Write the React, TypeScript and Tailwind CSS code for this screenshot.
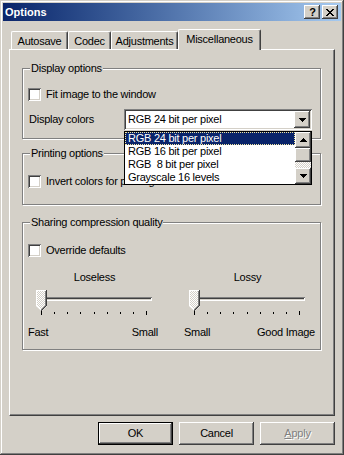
import React from "react";

const raised =
  "shadow-[inset_-1px_-1px_#404040,inset_1px_1px_#ffffff,inset_-2px_-2px_#808080]";
const sunken =
  "shadow-[inset_1px_1px_#808080,inset_-1px_-1px_#ffffff,inset_2px_2px_#404040,inset_-2px_-2px_#d4d0c8]";
const etched = "border border-[#808080] shadow-[inset_1px_1px_#ffffff,1px_1px_#ffffff]";

function Check() {
  return <div className={`w-[13px] h-[13px] bg-white shrink-0 ${sunken}`} />;
}

function DownArrow() {
  return (
    <svg width="7" height="4" viewBox="0 0 7 4">
      <path d="M0 0h7v1H0zM1 1h5v1H1zM2 2h3v1H2zM3 3h1v1H3z" fill="#000" />
    </svg>
  );
}

function UpArrow() {
  return (
    <svg width="7" height="4" viewBox="0 0 7 4">
      <path d="M3 0h1v1H3zM2 1h3v1H2zM1 2h5v1H1zM0 3h7v1H0z" fill="#000" />
    </svg>
  );
}

function Thumb({ id }: { id: string }) {
  return (
    <svg className="absolute left-0 top-0" width="11" height="21" viewBox="0 0 11 21">
      <defs>
        <pattern id={id} width="2" height="2" patternUnits="userSpaceOnUse">
          <rect width="2" height="2" fill="#d4d0c8" />
          <rect width="1" height="1" fill="#ffffff" />
          <rect x="1" y="1" width="1" height="1" fill="#ffffff" />
        </pattern>
      </defs>
      <path d="M0 0H11V16L5.5 21L0 16Z" fill={`url(#${id})`} />
      <path d="M0 0h10v1H0zM0 0h1v16H0zM1 16h1v1H1zM2 17h1v1H2zM3 18h1v1H3zM4 19h1v1H4z" fill="#ffffff" />
      <path d="M9 1h1v15H9zM8 16h1v1H8zM7 17h1v1H7zM6 18h1v1H6zM5 19h1v1H5z" fill="#808080" />
      <path d="M10 0h1v16h-1zM9 16h1v1H9zM8 17h1v1H8zM7 18h1v1H7zM6 19h1v1H6zM5 20h1v1H5z" fill="#404040" />
    </svg>
  );
}

function Slider({ id }: { id: string }) {
  const ticks = [0, 1, 2, 3, 4, 5, 6, 7, 8];
  return (
    <div className="relative w-[117px] h-[26px]">
      <div className={`absolute left-0 top-[7px] w-[116px] h-[4px] ${sunken}`} />
      <Thumb id={id} />
      <div className="absolute left-[5px] top-[21px] w-[106px] flex justify-between items-start">
        {ticks.map((t) =>
          t === 0 || t === 8 ? (
            <div key={t} className="w-[1px] h-[4px] bg-black" />
          ) : (
            <div key={t} className="w-[1px] h-[2px] mt-[1px] bg-black" />
          )
        )}
      </div>
    </div>
  );
}

export default function App() {
  return (
    <div
      className={`w-[344px] h-[455px] bg-[#d4d0c8] p-[3px] flex flex-col font-['Liberation_Sans',Arial,sans-serif] text-[11px] tracking-[-0.25px] text-black shadow-[inset_-1px_-1px_#404040,inset_1px_1px_#d4d0c8,inset_-2px_-2px_#808080,inset_2px_2px_#ffffff]`}
    >
      {/* Title bar */}
      <div className="h-[18px] shrink-0 flex items-center bg-gradient-to-r from-[#0a246a] to-[#a6caf0] pl-[2px] pr-[3px]">
        <span className="text-white font-bold tracking-normal leading-[13px]">Options</span>
        <div className="ml-auto flex gap-[2px]">
          <div className={`w-[16px] h-[14px] bg-[#d4d0c8] flex items-center justify-center ${raised}`}>
            <span className="font-bold text-[11px] leading-[11px] tracking-normal pl-[1px]">?</span>
          </div>
          <div className={`w-[16px] h-[14px] bg-[#d4d0c8] flex items-center justify-center ${raised}`}>
            <svg width="8" height="7" viewBox="0 0 8 7">
              <path
                d="M0 0h2v1H0zM6 0h2v1H6zM1 1h2v1H1zM5 1h2v1H5zM2 2h4v1H2zM3 3h2v1H3zM2 4h4v1H2zM1 5h2v1H1zM5 5h2v1H5zM0 6h2v1H0zM6 6h2v1H6z"
                fill="#000"
              />
            </svg>
          </div>
        </div>
      </div>

      {/* Tab control */}
      <div className="mt-[8px] mx-[6px] flex flex-col">
        <div className="h-[20px] flex items-end pl-[2px]">
          <div className="w-[57px] h-[18px] flex items-center justify-center pt-[2px] border-t border-l border-r border-t-white border-l-white border-r-[#404040] shadow-[inset_-1px_0_#808080] rounded-t-[2px]">
            Autosave
          </div>
          <div className="w-[43px] h-[18px] flex items-center justify-center pt-[2px] border-t border-l border-r border-t-white border-l-white border-r-[#404040] shadow-[inset_-1px_0_#808080] rounded-t-[2px]">
            Codec
          </div>
          <div className="w-[67px] h-[18px] flex items-center justify-center pt-[2px] border-t border-l border-r border-t-white border-l-white border-r-[#404040] shadow-[inset_-1px_0_#808080] rounded-t-[2px]">
            Adjustments
          </div>
          <div className="relative z-10 -mb-px w-[83px] h-[21px] bg-[#d4d0c8] flex items-center justify-center pb-[1px] border-t border-l border-r border-t-white border-l-white border-r-[#404040] shadow-[inset_-1px_0_#808080] rounded-t-[2px]">
            Miscellaneous
          </div>
        </div>

        <div className="h-[367px] flex flex-col border-t border-l border-r border-b border-t-white border-l-white border-r-[#404040] border-b-[#404040] shadow-[inset_-1px_-1px_#808080]">
          {/* Display options */}
          <div className={`relative w-[299px] h-[71px] ml-[12px] mt-[18px] pl-[5px] pt-[19px] ${etched}`}>
            <span className="absolute -top-[7px] left-[7px] px-[1px] bg-[#d4d0c8] leading-[13px]">
              Display options
            </span>
            <div className="flex items-center h-[13px]">
              <Check />
              <span className="ml-[5px] leading-[13px]">Fit image to the window</span>
            </div>
            <div className="flex items-center mt-[8px]">
              <div className="w-[96px] pl-[1px] leading-[13px]">Display colors</div>
              <div className="relative">
                <div className={`w-[188px] h-[21px] bg-white flex items-center p-[2px] ${sunken}`}>
                  <span className="flex-1 pl-[2px] leading-[13px] whitespace-pre">RGB 24 bit per pixel</span>
                  <div className={`w-[16px] h-[17px] bg-[#d4d0c8] flex items-center justify-center ${raised}`}>
                    <DownArrow />
                  </div>
                </div>
                {/* Open dropdown list */}
                <div className="absolute left-0 top-[22px] z-20 w-[188px] h-[54px] border border-black bg-white flex">
                  <div className="flex-1 flex flex-col">
                    <div className="h-[13px] bg-[#0a246a] text-white border border-dotted border-[#f4e8a0] pl-[2px] leading-[11px] whitespace-pre">
                      RGB 24 bit per pixel
                    </div>
                    <div className="h-[13px] pl-[3px] leading-[13px] whitespace-pre">RGB 16 bit per pixel</div>
                    <div className="h-[13px] pl-[3px] leading-[13px] whitespace-pre">RGB  8 bit per pixel</div>
                    <div className="h-[13px] pl-[3px] leading-[13px] whitespace-pre">Grayscale 16 levels</div>
                  </div>
                  <div className="w-[16px] flex flex-col">
                    <div className={`h-[16px] bg-[#d4d0c8] flex items-center justify-center ${raised}`}>
                      <UpArrow />
                    </div>
                    <div className={`h-[14px] bg-[#d4d0c8] ${raised}`} />
                    <div className="h-[6px] bg-[image:repeating-conic-gradient(#ffffff_0_25%,#d4d0c8_0_50%)] bg-[length:2px_2px]" />
                    <div className={`h-[16px] bg-[#d4d0c8] flex items-center justify-center ${raised}`}>
                      <DownArrow />
                    </div>
                  </div>
                </div>
              </div>
            </div>
          </div>

          {/* Printing options */}
          <div className={`relative w-[299px] h-[52px] ml-[12px] mt-[14px] pl-[5px] pt-[21px] ${etched}`}>
            <span className="absolute -top-[7px] left-[7px] px-[1px] bg-[#d4d0c8] leading-[13px]">
              Printing options
            </span>
            <div className="flex items-center h-[13px]">
              <Check />
              <span className="ml-[5px] leading-[13px]">Invert colors for printing</span>
            </div>
          </div>

          {/* Sharing compression quality */}
          <div className={`relative w-[299px] h-[128px] ml-[12px] mt-[17px] pl-[5px] pt-[21px] ${etched}`}>
            <span className="absolute -top-[7px] left-[7px] px-[1px] bg-[#d4d0c8] leading-[13px]">
              Sharing compression quality
            </span>
            <div className="flex items-center h-[13px]">
              <Check />
              <span className="ml-[5px] leading-[13px]">Override defaults</span>
            </div>
            <div className="flex gap-[26px] mt-[14px]">
              <div className="w-[130px] flex flex-col">
                <div className="w-[117px] ml-[8px] flex flex-col">
                  <div className="text-center leading-[13px]">Loseless</div>
                  <div className="mt-[6px]">
                    <Slider id="d1" />
                  </div>
                </div>
                <div className="flex justify-between mt-[10px] leading-[13px]">
                  <span>Fast</span>
                  <span>Small</span>
                </div>
              </div>
              <div className="w-[131px] flex flex-col">
                <div className="w-[117px] ml-[5px] flex flex-col">
                  <div className="text-center leading-[13px]">Lossy</div>
                  <div className="mt-[6px]">
                    <Slider id="d2" />
                  </div>
                </div>
                <div className="flex justify-between mt-[10px] leading-[13px]">
                  <span>Small</span>
                  <span>Good Image</span>
                </div>
              </div>
            </div>
          </div>
        </div>

        {/* Buttons */}
        <div className="flex justify-end gap-[6px] mt-[6px]">
          <div className={`w-[75px] h-[23px] border border-black flex items-center justify-center ${raised}`}>
            OK
          </div>
          <div className={`w-[75px] h-[23px] flex items-center justify-center ${raised}`}>Cancel</div>
          <div
            className={`w-[75px] h-[23px] flex items-center justify-center text-[#808080] [text-shadow:1px_1px_#ffffff] ${raised}`}
          >
            <span className="underline">A</span>pply
          </div>
        </div>
      </div>
    </div>
  );
}
